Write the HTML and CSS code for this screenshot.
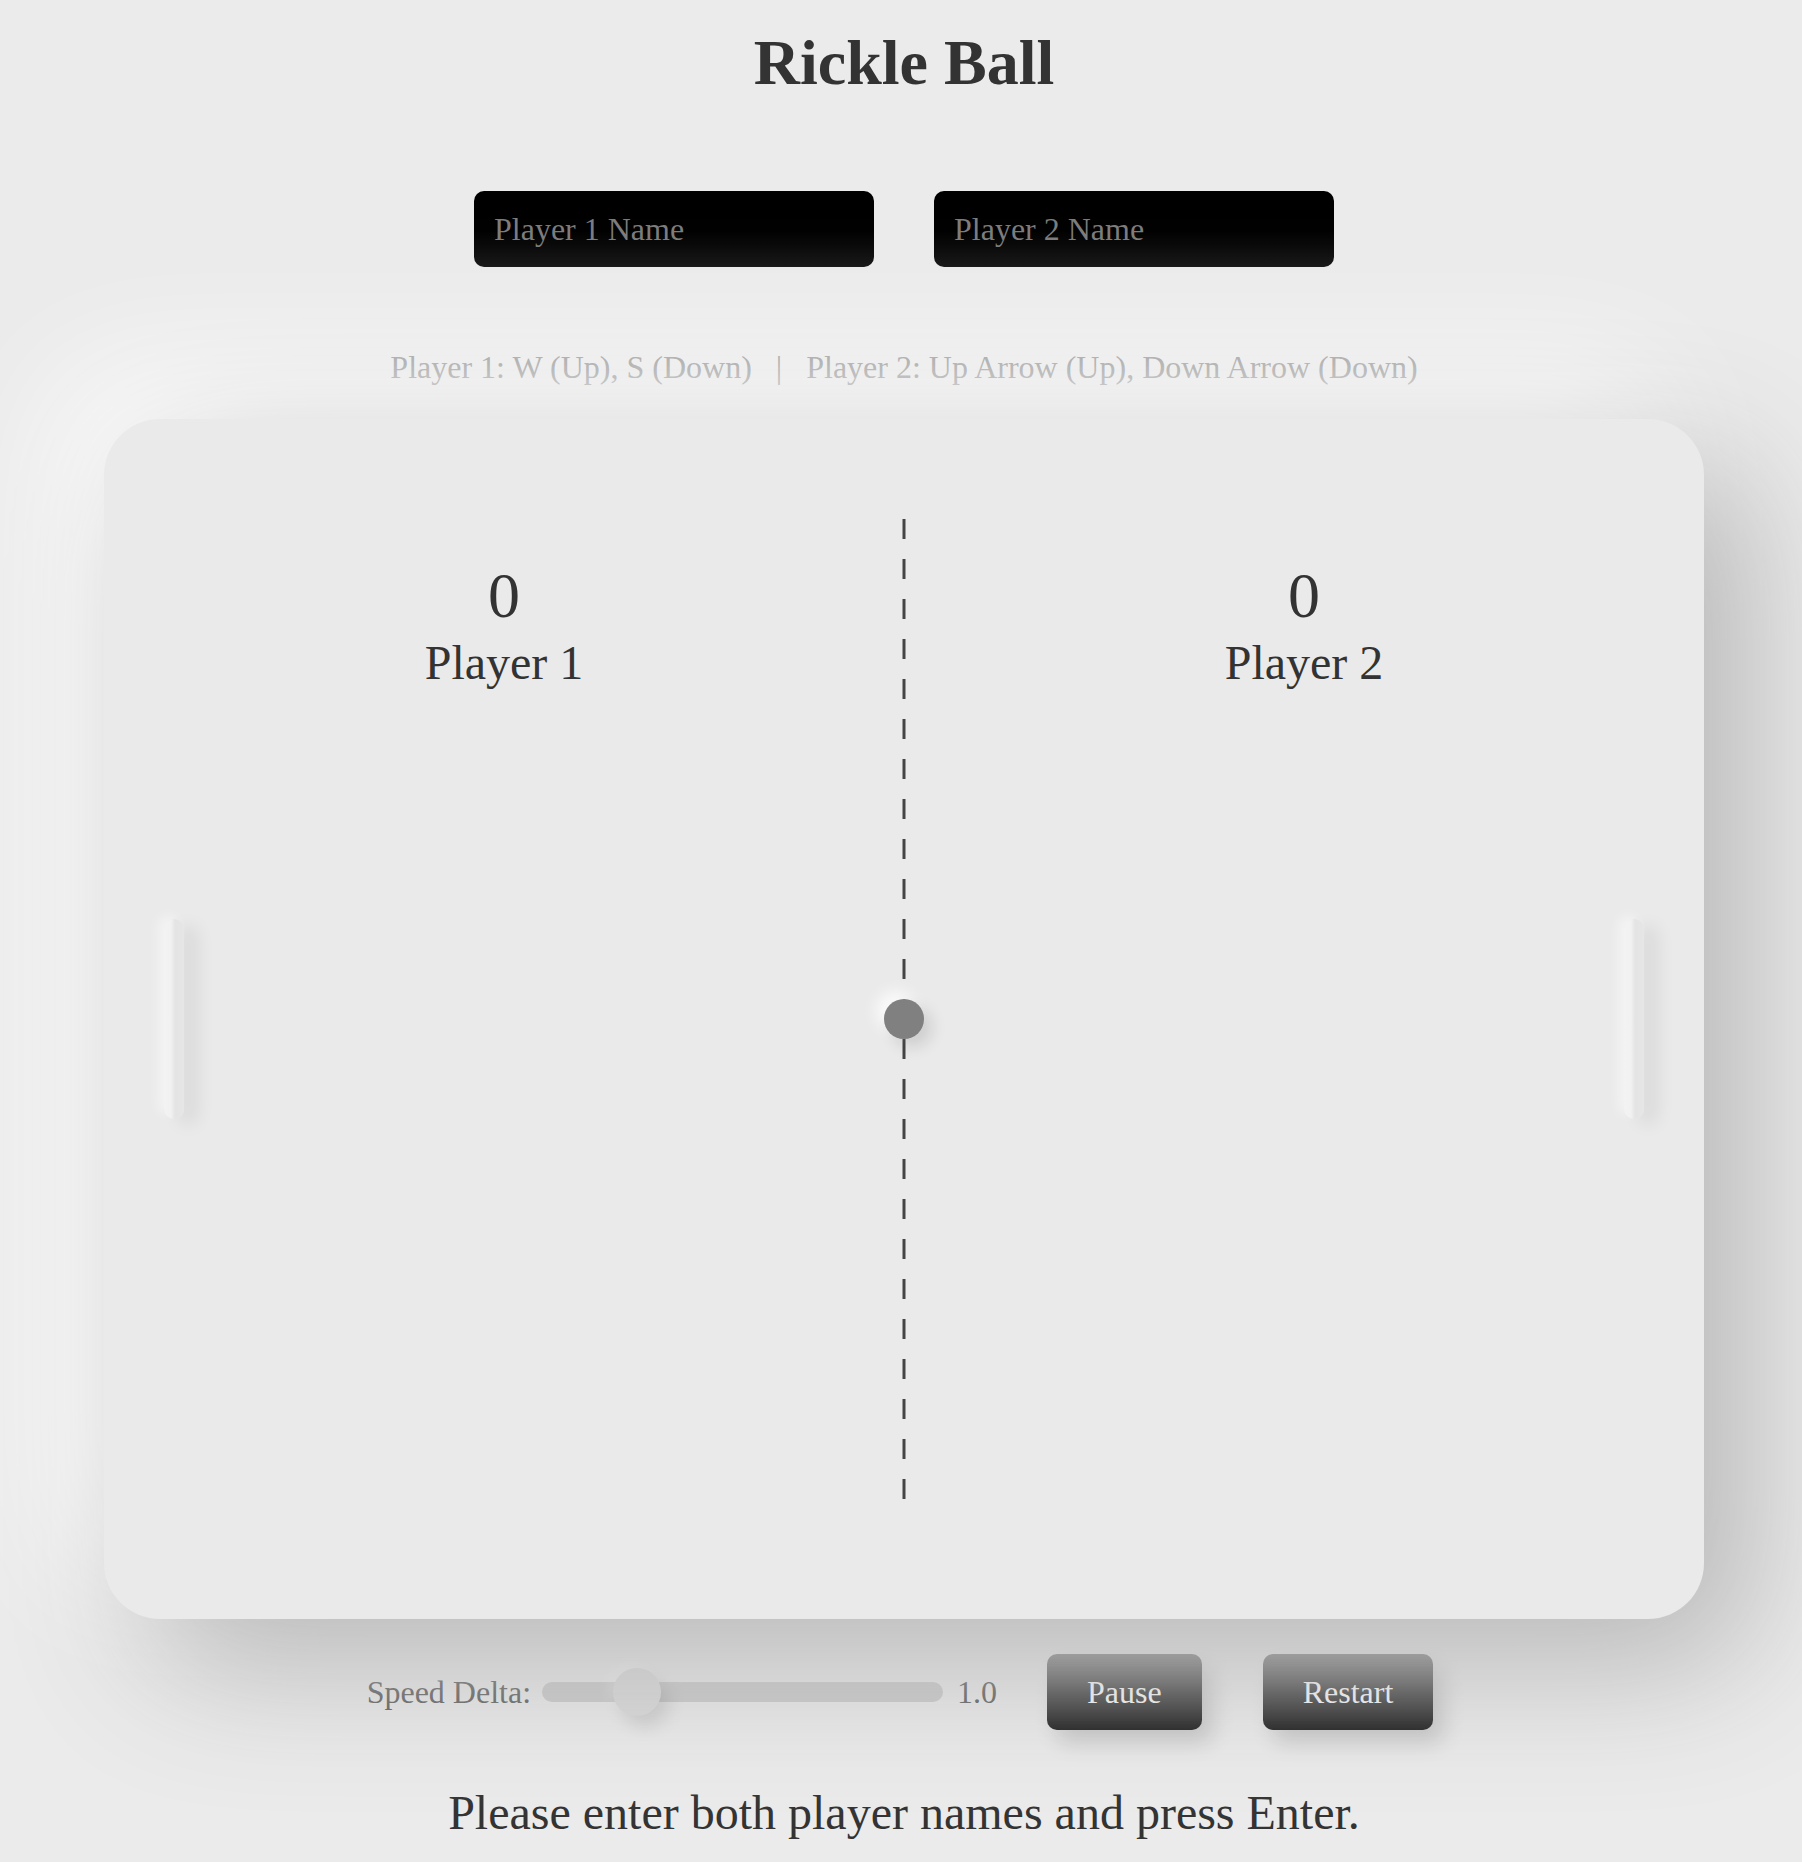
FILE: index.html
```html
<!DOCTYPE html>
<html lang="en">
<head>
<meta charset="utf-8">
<title>Rickle Ball</title>
<link rel="stylesheet" href="styles.css">
</head>
<body>
<main class="page">
  <h1 class="title">Rickle Ball</h1>
  <div class="names">
    <input class="name-input" type="text" placeholder="Player 1 Name">
    <input class="name-input" type="text" placeholder="Player 2 Name">
  </div>
  <p class="instructions">Player 1: W (Up), S (Down) <span class="sep">|</span> Player 2: Up Arrow (Up), Down Arrow (Down)</p>
  <div class="board">
    <svg class="net" width="1600" height="1200" viewBox="0 0 1600 1200">
      <line x1="800" y1="100" x2="800" y2="1100" stroke="#444" stroke-width="3" stroke-dasharray="20 20"/>
    </svg>
    <div class="score score-left">
      <div class="score-num">0</div>
      <div class="score-name">Player 1</div>
    </div>
    <div class="score score-right">
      <div class="score-num">0</div>
      <div class="score-name">Player 2</div>
    </div>
    <div class="paddle paddle-left"></div>
    <div class="paddle paddle-right"></div>
    <div class="ball"></div>
  </div>
  <div class="controls">
    <label class="speed-label" for="speed">Speed Delta:</label>
    <input class="speed" id="speed" type="range" min="0.5" max="3" step="0.1" value="1.0">
    <span class="speed-value">1.0</span>
    <button class="btn btn-pause">Pause</button>
    <button class="btn btn-restart">Restart</button>
  </div>
  <p class="status">Please enter both player names and press Enter.</p>
</main>
</body>
</html>
```

FILE: styles.css
```css
html, body {
  margin: 0;
  padding: 0;
}
body {
  background: #ebebeb;
  font-family: "Liberation Serif", "Times New Roman", serif;
  color: #333;
  overflow: hidden;
}
.page {
  width: 1796px;
  padding-left: 6px;
  display: flex;
  flex-direction: column;
  align-items: center;
}
.title {
  margin: 27px 0 0;
  font-size: 64px;
  line-height: 72px;
  font-weight: bold;
  color: #333;
}
.names {
  margin-top: 92px;
  display: flex;
  gap: 60px;
}
.name-input {
  width: 400px;
  height: 76px;
  box-sizing: border-box;
  padding: 0 20px;
  border: none;
  border-radius: 10px;
  background: linear-gradient(#000 0%, #000 50%, #111 100%);
  color: #ddd;
  font-family: "Liberation Serif", "Times New Roman", serif;
  font-size: 32px;
  outline: none;
}
.name-input::placeholder {
  color: #7c7c7c;
}
.instructions {
  margin: 82px 0 0;
  font-size: 32px;
  line-height: 36px;
  color: #808080;
  white-space: pre;
}
.sep {
  margin: 0 16px;
}
.board {
  position: relative;
  margin-top: 34px;
  width: 1600px;
  height: 1200px;
  border-radius: 56px;
  background: #eaeaea;
  box-shadow: 46px 46px 140px #b6b6b6, -44px -44px 130px #ffffff;
}
.net {
  position: absolute;
  left: 0;
  top: 0;
}
.score {
  position: absolute;
  top: 145px;
  width: 400px;
  text-align: center;
  color: #333;
}
.score-left { left: 200px; }
.score-right { left: 1000px; }
.score-num {
  font-size: 64px;
  line-height: 64px;
}
.score-name {
  margin-top: 11px;
  font-size: 48px;
  line-height: 48px;
}
.paddle {
  position: absolute;
  top: 500px;
  width: 20px;
  height: 200px;
  border-radius: 10px;
  background: linear-gradient(90deg, #f3f3f3 0%, #f1f1f1 35%, #e4e4e4 55%, #e6e6e6 100%);
  box-shadow: 14px 6px 18px rgba(0, 0, 0, 0.07), -6px -4px 12px rgba(255, 255, 255, 0.45);
}
.paddle-left { left: 60px; }
.paddle-right { left: 1520px; }
.ball {
  position: absolute;
  left: 780px;
  top: 580px;
  width: 40px;
  height: 40px;
  border-radius: 50%;
  background: #808080;
  box-shadow: 8px 8px 16px rgba(0, 0, 0, 0.12), -8px -8px 16px rgba(255, 255, 255, 0.8);
}
.controls {
  margin-top: 35px;
  margin-right: 8px;
  height: 76px;
  display: flex;
  align-items: center;
}
.speed-label {
  font-size: 32px;
  color: #555;
}
.speed {
  -webkit-appearance: none;
  appearance: none;
  margin: 0 14px 0 11px;
  width: 401px;
  height: 20px;
  border-radius: 10px;
  background: #c9c9c9;
  outline: none;
}
.speed::-webkit-slider-thumb {
  -webkit-appearance: none;
  appearance: none;
  width: 48px;
  height: 48px;
  border-radius: 50%;
  background: #dadada;
  box-shadow: 8px 10px 18px rgba(0, 0, 0, 0.13), -6px -6px 12px rgba(255, 255, 255, 0.25);
  cursor: pointer;
}
.speed-value {
  font-size: 32px;
  color: #555;
}
.btn {
  height: 76px;
  padding: 0 40px;
  border: none;
  border-radius: 10px;
  background-color: #333;
  background-image: linear-gradient(180deg, #6e6e6e 0%, #3c3c3c 50%, #161616 100%);
  color: #fafafa;
  font-family: "Liberation Serif", "Times New Roman", serif;
  font-size: 32px;
  box-shadow: 10px 12px 22px rgba(0, 0, 0, 0.16);
  cursor: pointer;
}
.btn-pause { margin-left: 50px; }
.btn-restart { margin-left: 61px; }
.status {
  margin: 55px 0 0;
  font-size: 48px;
  line-height: 56px;
  color: #333;
}
```
